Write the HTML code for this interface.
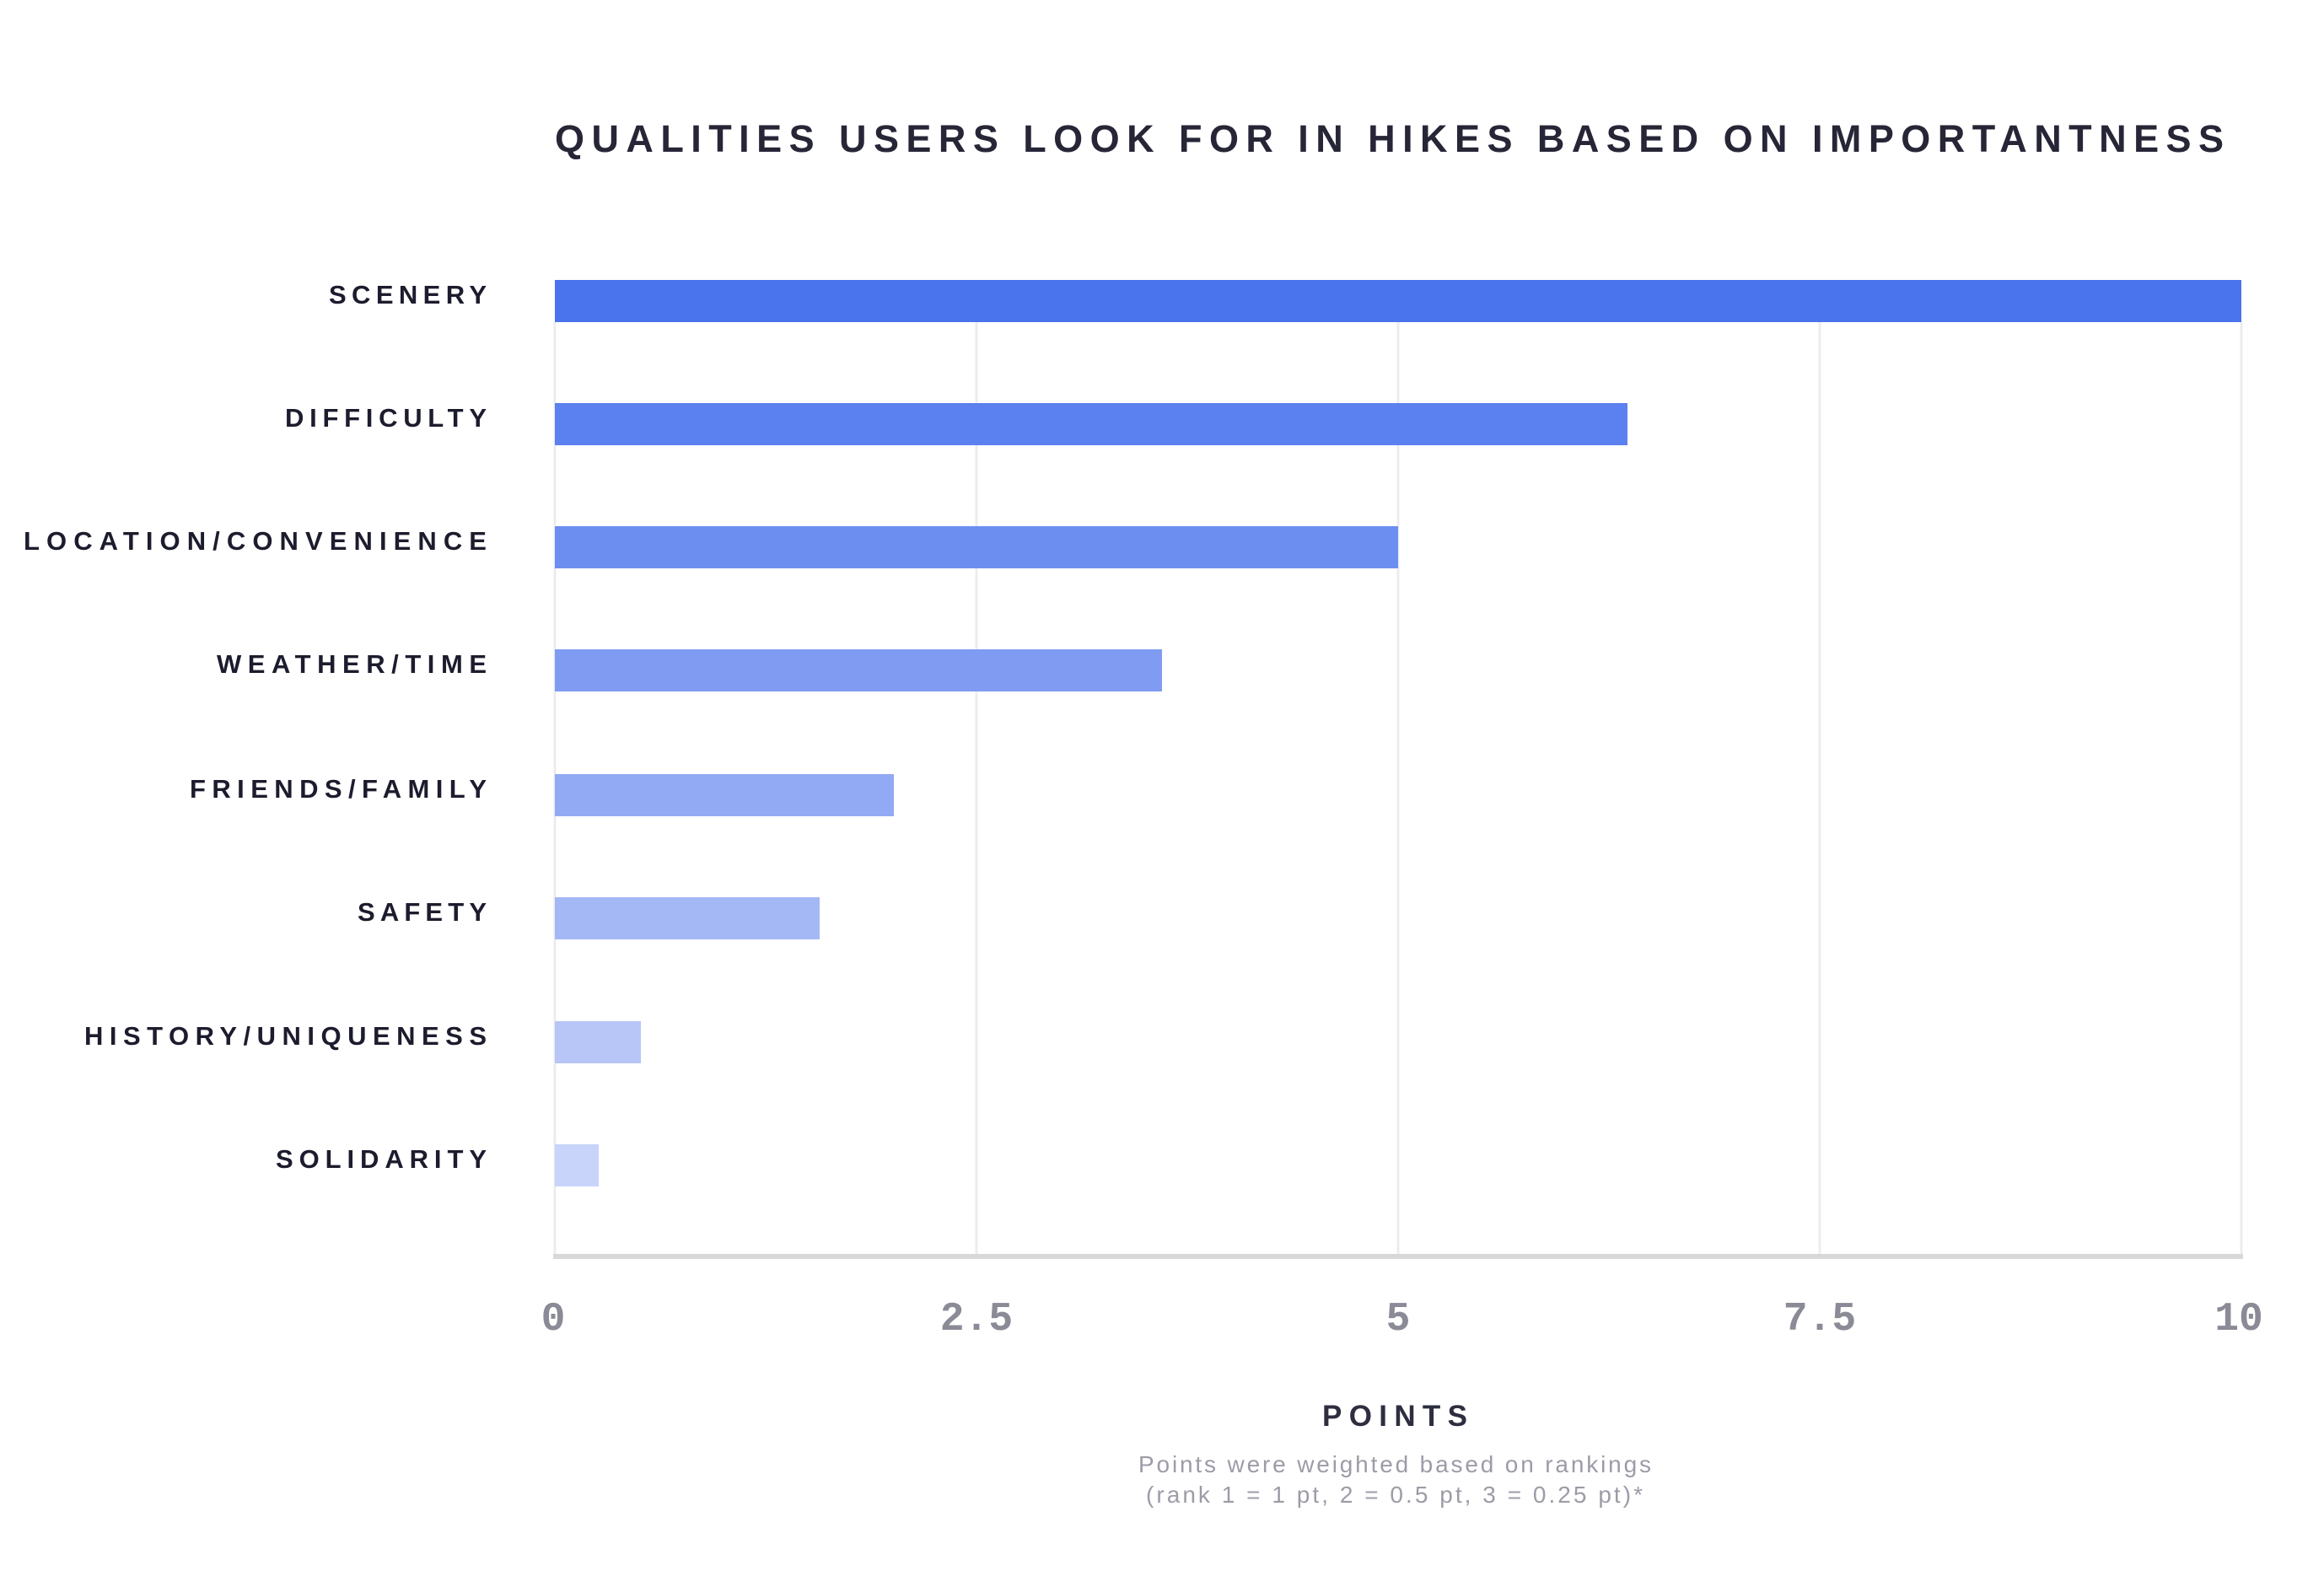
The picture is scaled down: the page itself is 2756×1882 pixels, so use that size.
<!DOCTYPE html>
<html><head><meta charset="utf-8"><style>
html,body{margin:0;padding:0;background:#fff;width:2756px;height:1882px;overflow:hidden}
svg{display:block}
.lab{font-family:"Liberation Sans",sans-serif;font-weight:bold;font-size:31px;fill:#1c1c2e}
</style></head><body>
<svg width="2756" height="1882" viewBox="0 0 2756 1882" xmlns="http://www.w3.org/2000/svg">
<rect width="2756" height="1882" fill="#fff"/>
<text x="658" y="180" textLength="1979" lengthAdjust="spacing" font-family="Liberation Sans, sans-serif" font-weight="bold" font-size="45" fill="#262637">QUALITIES USERS LOOK FOR IN HIKES BASED ON IMPORTANTNESS</text>
<g stroke="#ececef" stroke-width="3">
<line x1="658" y1="382" x2="658" y2="1488"/>
<line x1="1158" y1="382" x2="1158" y2="1488"/>
<line x1="1658" y1="382" x2="1658" y2="1488"/>
<line x1="2158" y1="382" x2="2158" y2="1488"/>
<line x1="2658" y1="382" x2="2658" y2="1488"/>
</g>
<rect x="656" y="1487" width="2004" height="6" fill="#d8d8da"/>
<rect x="658" y="332" width="2000" height="50" fill="#4a73ee"/>
<rect x="658" y="478" width="1272" height="50" fill="#5b81f0"/>
<rect x="658" y="624" width="1000" height="50" fill="#6d8ef1"/>
<rect x="658" y="770" width="720" height="50" fill="#7f9cf2"/>
<rect x="658" y="918" width="402" height="50" fill="#92aaf4"/>
<rect x="658" y="1064" width="314" height="50" fill="#a4b8f5"/>
<rect x="658" y="1211" width="102" height="50" fill="#b7c6f7"/>
<rect x="658" y="1357" width="52" height="50" fill="#c8d4f9"/>
<text class="lab" x="390" y="360" textLength="187" lengthAdjust="spacing">SCENERY</text>
<text class="lab" x="338" y="506" textLength="239" lengthAdjust="spacing">DIFFICULTY</text>
<text class="lab" x="28" y="652" textLength="549" lengthAdjust="spacing">LOCATION/CONVENIENCE</text>
<text class="lab" x="257" y="798" textLength="320" lengthAdjust="spacing">WEATHER/TIME</text>
<text class="lab" x="225" y="946" textLength="352" lengthAdjust="spacing">FRIENDS/FAMILY</text>
<text class="lab" x="424" y="1092" textLength="153" lengthAdjust="spacing">SAFETY</text>
<text class="lab" x="100" y="1239" textLength="477" lengthAdjust="spacing">HISTORY/UNIQUENESS</text>
<text class="lab" x="327" y="1385" textLength="250" lengthAdjust="spacing">SOLIDARITY</text>
<g font-family="Liberation Mono, monospace" font-size="48" font-weight="bold" fill="#8b8b97" text-anchor="middle">
<text x="656" y="1577">0</text>
<text x="1158" y="1577">2.5</text>
<text x="1658" y="1577">5</text>
<text x="2158" y="1577">7.5</text>
<text x="2655" y="1577">10</text>
</g>
<text x="1568" y="1691" textLength="172" lengthAdjust="spacing" font-family="Liberation Sans, sans-serif" font-weight="bold" font-size="35" fill="#2e2e40">POINTS</text>
<g font-family="Liberation Sans, sans-serif" font-size="28" fill="#9c9ca8">
<text x="1350" y="1746" textLength="608" lengthAdjust="spacing">Points were weighted based on rankings</text>
<text x="1359" y="1782" textLength="589" lengthAdjust="spacing">(rank 1 = 1 pt, 2 = 0.5 pt, 3 = 0.25 pt)*</text>
</g>
</svg>
</body></html>
